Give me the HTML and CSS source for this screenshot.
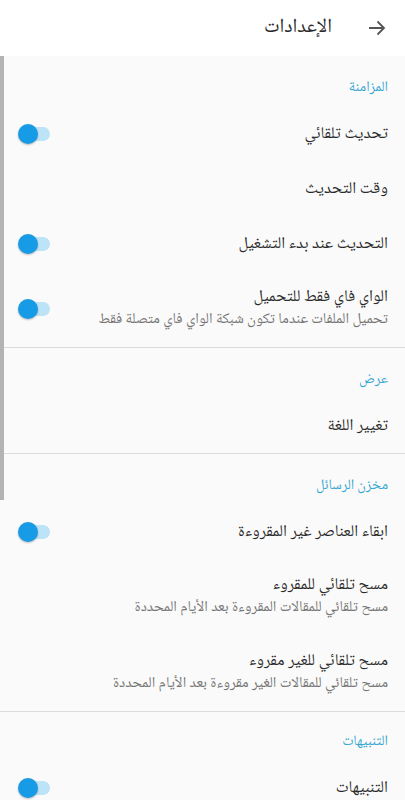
FILE: index.html
```html
<!DOCTYPE html>
<html lang="ar" dir="rtl">
<head>
    <meta charset="UTF-8">
    <meta name="viewport" content="width=device-width, initial-scale=1.0">
    <title>الإعدادات</title>
    <link rel="stylesheet" href="styles.css">
</head>
<body>
    <div class="appbar">
        <svg class="back" width="18" height="16" viewBox="0 0 18 16">
            <path d="M1 8H16M9.5 1.5L16 8L9.5 14.5" fill="none" stroke="#555" stroke-width="1.8"/>
        </svg>
        <h1 class="title">الإعدادات</h1>
    </div>

    <div class="content">
        <div class="scrollbar"></div>

        <div class="section">
            <div class="category">المزامنة</div>
            <div class="pref">
                <div class="text"><div class="name">تحديث تلقائي</div></div>
                <div class="switch"><span class="track"></span><span class="thumb"></span></div>
            </div>
            <div class="pref">
                <div class="text"><div class="name">وقت التحديث</div></div>
            </div>
            <div class="pref">
                <div class="text"><div class="name">التحديث عند بدء التشغيل</div></div>
                <div class="switch"><span class="track"></span><span class="thumb"></span></div>
            </div>
            <div class="pref double">
                <div class="text">
                    <div class="name">الواي فاي فقط للتحميل</div>
                    <div class="summary">تحميل الملفات عندما تكون شبكة الواي فاي متصلة فقط</div>
                </div>
                <div class="switch"><span class="track"></span><span class="thumb"></span></div>
            </div>
        </div>

        <div class="section">
            <div class="category">عرض</div>
            <div class="pref">
                <div class="text"><div class="name">تغيير اللغة</div></div>
            </div>
        </div>

        <div class="section">
            <div class="category">مخزن الرسائل</div>
            <div class="pref">
                <div class="text"><div class="name">ابقاء العناصر غير المقروءة</div></div>
                <div class="switch"><span class="track"></span><span class="thumb"></span></div>
            </div>
            <div class="pref double">
                <div class="text">
                    <div class="name">مسح تلقائي للمقروء</div>
                    <div class="summary">مسح تلقائي للمقالات المقروءة بعد الأيام المحددة</div>
                </div>
            </div>
            <div class="pref double">
                <div class="text">
                    <div class="name">مسح تلقائي للغير مقروء</div>
                    <div class="summary">مسح تلقائي للمقالات الغير مقروءة بعد الأيام المحددة</div>
                </div>
            </div>
        </div>

        <div class="section last">
            <div class="category">التنبيهات</div>
            <div class="pref">
                <div class="text"><div class="name">التنبيهات</div></div>
                <div class="switch"><span class="track"></span><span class="thumb"></span></div>
            </div>
        </div>
    </div>
</body>
</html>
```

FILE: styles.css
```css
body {
    margin: 0;
    background-color: #fafafa;
    font-family: "Noto Naskh Arabic", "Noto Sans Arabic", "DejaVu Sans", sans-serif;
    color: #2a2a2a;
    overflow: hidden;
}
.appbar {
    height: 56px;
    background-color: #ffffff;
    display: flex;
    align-items: center;
    padding-right: 19px;
}
.back {
    display: block;
}
.title {
    margin: 0 36px 0 0;
    font-size: 20px;
    font-weight: normal;
    color: #2a2a2a;
}
.content {
    position: relative;
}
.scrollbar {
    position: absolute;
    left: 0;
    top: 0;
    width: 4px;
    height: 444px;
    background-color: #b3b3b3;
}
.section {
    border-bottom: 1px solid #dcdcdc;
}
.category {
    height: 50px;
    box-sizing: border-box;
    padding: 23px 17px 0 0;
    font-size: 14.5px;
    line-height: 18px;
    color: #35a7d1;
}
.section.last .category {
    height: 48px;
    padding-top: 21px;
}
.pref {
    height: 55px;
    display: flex;
    align-items: center;
    padding: 0 17px 0 18px;
}
.pref.double {
    height: 76px;
    align-items: flex-start;
}
.pref.double .text {
    padding-top: 15px;
}
.name {
    font-size: 16.5px;
    line-height: 22px;
}
.summary {
    margin-top: 2px;
    font-size: 15px;
    line-height: 20px;
    color: #757575;
}
.switch {
    margin-right: auto;
    position: relative;
    width: 32px;
    height: 20px;
}
.pref.double .switch {
    margin-top: 28px;
}
.track {
    position: absolute;
    left: 2px;
    top: 3px;
    width: 30px;
    height: 14px;
    border-radius: 7px;
    background-color: #bde3f7;
}
.thumb {
    position: absolute;
    left: 0;
    top: 0;
    width: 20px;
    height: 20px;
    border-radius: 50%;
    background-color: #179be6;
    box-shadow: 0 1px 2px rgba(0, 0, 0, 0.25);
}
```
